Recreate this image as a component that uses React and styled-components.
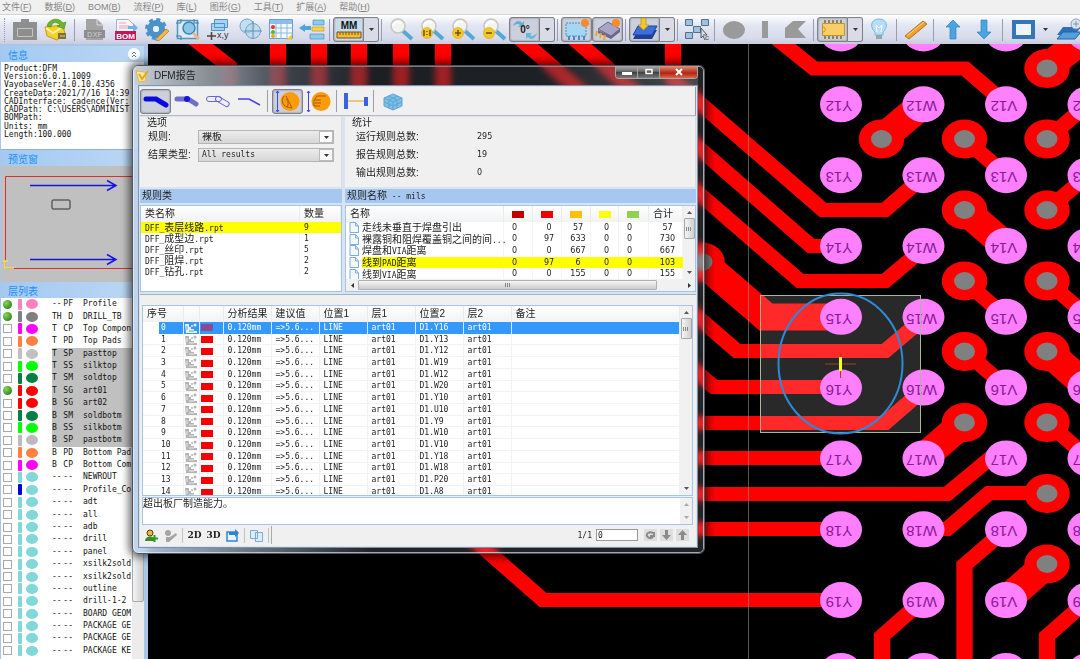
import React from "react";
import styled, { createGlobalStyle, css } from "styled-components";

const sans = `"DejaVu Sans", "Noto Sans CJK SC", sans-serif`;
const cjk = `"Liberation Sans", "Noto Sans CJK SC", sans-serif`;
const mono = `"DejaVu Sans Mono", "Noto Sans CJK SC", monospace`;

const GlobalStyle = createGlobalStyle`
  *, *::before, *::after { box-sizing: border-box; }
  body { margin: 0; background: #000; overflow: hidden; }
  button, input, select, textarea { font: inherit; color: inherit; margin: 0; }
  button { padding: 0; border: 0; background: none; }
`;

const Page = styled.div`
  position: relative;
  display: flex;
  flex-direction: column;
  height: 100vh;
  overflow: hidden;
  color: #222;
  font-family: ${cjk};
  font-size: 10px;
`;

const MenuBar = styled.nav`
  display: flex;
  gap: 13px;
  height: 15px;
  padding: 0 2px;
  background: #f0f0f0;
  border-bottom: 1px solid #d4d4d8;
`;

const MenuItem = styled.button`
  flex: none;
  color: #858585;
  font-size: 9px;
  line-height: 13px;
`;

const Toolbar = styled.div`
  display: flex;
  flex: none;
  align-items: center;
  height: 29px;
  overflow: hidden;
  background: linear-gradient(#fff, #e4e7f3 35%, #d6daea 80%, #c8ccdc);
`;

const Handle = styled.div`
  flex: none;
  width: 9px;
  height: 24px;
  border-left: 1px dotted #999;
  margin-left: 4px;
  margin-right: -4px;
`;

const Separator = styled.div`
  flex: none;
  width: 1px;
  height: 22px;
  margin: 0 ${(p) => (p.$wide ? "4px 0 3px" : "3px 0 2px")};
  background: #9a9eac;
`;

const ToolButton = styled.button`
  flex: none;
  display: flex;
  align-items: center;
  justify-content: center;
  width: 31px;
  height: 25px;
  svg { display: block; flex: none; }
  ${(p) =>
    p.$pressed &&
    css`
      border: 1px solid #7d7f88;
      border-radius: 3px;
      background: #ccd0dc;
      box-shadow: inset 0 0 2px #777;
    `}
`;

const Split = styled.div`
  display: flex;
  flex: none;
  ${ToolButton} { border-radius: 3px 0 0 3px; }
`;

const Drop = styled.button`
  flex: none;
  display: flex;
  align-items: center;
  justify-content: center;
  width: 15px;
  height: 25px;
  ${(p) =>
    p.$pressed &&
    css`
      border: 1px solid #7d7f88;
      border-left: 0;
      border-radius: 0 3px 3px 0;
      background: #d9dce6;
    `}
`;

const Workspace = styled.main`
  display: flex;
  flex: 1;
  min-height: 0;
`;

const Sidebar = styled.aside`
  display: flex;
  flex: none;
  flex-direction: column;
  width: 148px;
  padding: 2px 4px 0 1px;
  background: #aac6e6;
`;

const PanelHead = styled.h2`
  display: flex;
  flex: none;
  align-items: center;
  justify-content: space-between;
  height: 16px;
  margin: 0;
  padding: 0 4px 0 7px;
  background: linear-gradient(90deg, #a3c9f2, #bcd8f4);
  color: #2090f4;
  font-size: 10px;
  font-weight: 400;
`;

const Fold = styled.button`
  display: flex;
  width: 12px;
  height: 12px;
  border-radius: 6px;
  background: #fff;
`;

const Info = styled.div`
  display: grid;
  grid-auto-rows: 1fr;
  flex: none;
  height: 88px;
  padding: 3px 0 10px 3px;
  overflow: hidden;
  background: #fff;
  border-bottom: 1px solid #8fb0d6;
  color: #111;
  font-family: ${mono};
  font-size: 8px;
  line-height: 8px;
  white-space: pre;
`;

const Preview = styled.svg`
  display: block;
  flex: none;
  width: 100%;
  height: 116px;
  background: #c0c0c0;
`;

const LayerArea = styled.div`
  display: flex;
  flex: 1;
  min-height: 0;
  background: #fff;
`;

const LayerList = styled.div`
  display: grid;
  grid-auto-rows: 1fr;
  flex: 1;
  min-width: 0;
  padding-bottom: 2px;
  font-family: ${mono};
  font-size: 8px;
`;

const LayerRow = styled.label`
  display: grid;
  grid-template-columns: 15px 8px 26px 11px 20px 1fr;
  align-items: center;
  min-height: 0;
  padding-left: 2px;
  overflow: hidden;
  line-height: 10px;
  white-space: pre;
  color: #111;
  background: ${(p) =>
    p.$shaded ? "linear-gradient(90deg, #fff 51px, #c0c0c0 51px)" : "#fff"};
`;

const Visible = styled.input`
  appearance: none;
  width: 9px;
  height: 9px;
  border: 1px solid #a8a8a8;
  background: #fff;
  &:checked {
    border: 0;
    border-radius: 5px;
    background: radial-gradient(circle at 3px 3px, #8fd657, #2c8a1c 75%);
  }
`;

const LayerBar = styled.span`
  width: 4px;
  height: 11px;
  border-radius: 1px;
  background: ${(p) => p.$color};
`;

const LayerDot = styled.span`
  width: 12px;
  height: 10px;
  border-radius: 50%;
  background: ${(p) => p.$color};
`;

const Kind = styled.span`
  width: 10px;
  text-align: right;
`;

const SideScroll = styled.div`
  flex: none;
  width: 12px;
  background: #ececec;
  &::before {
    content: "";
    display: block;
    height: 304px;
    border: 1px solid #aaa;
    border-radius: 2px;
    background: linear-gradient(90deg, #f4f4f4, #cfcfd2);
  }
`;

const Board = styled.svg`
  display: block;
  flex: 1;
  min-width: 0;
  height: 100%;
  background: #000;
`;

/* the report window floats over the board */
const Window = styled.section`
  position: absolute;
  left: 132px;
  top: 65px;
  width: 573px;
  padding: 0 6px 5px 5px;
  border: 1px solid #50565e;
  border-radius: 6px;
  background: linear-gradient(90deg, rgba(190, 212, 238, 0.9) 6px, rgba(150, 160, 175, 0.22) 240px);
  box-shadow: inset 0 0 0 1px rgba(235, 240, 250, 0.65), 0 0 8px 3px rgba(0, 0, 0, 0.6);
  backdrop-filter: blur(3px);
`;

const TitleBar = styled.header`
  display: flex;
  justify-content: space-between;
  height: 19px;
  margin-left: -3px;
  border-radius: 5px 5px 0 0;
  background: linear-gradient(90deg, rgba(198, 205, 214, 0.9), rgba(140, 145, 150, 0.85) 70px, rgba(20, 25, 30, 0.4) 150px, rgba(20, 25, 30, 0.3) 400px, rgba(120, 130, 135, 0.4));
`;

const Title = styled.h1`
  display: flex;
  align-items: center;
  gap: 5px;
  margin: 0;
  color: #222;
  font-size: 10px;
  font-weight: 400;
  line-height: 18px;
`;

const WindowButtons = styled.div`
  display: flex;
  height: 13px;
  border: 1px solid #a6a6a6;
  border-top: 0;
  border-radius: 0 0 4px 4px;
  overflow: hidden;
`;

const WindowButton = styled.button`
  display: flex;
  align-items: center;
  justify-content: center;
  width: ${(p) => (p.$close ? 37 : 22)}px;
  border-right: 1px solid #a6a6a6;
  background: ${(p) =>
    p.$close
      ? "linear-gradient(#d79686, #c03a26 45%, #b42414 60%, #d8694a)"
      : "linear-gradient(#a8a8a8, #6c6c6c 45%, #3c3c3c 50%, #7a7a7a)"};
  &:last-child { border-right: 0; }
`;

const Client = styled.div`
  padding: 1px;
  background: #d9e4f2;
  border: 1px solid #8492a4;
`;

const ReportTools = styled.div`
  display: flex;
  align-items: center;
  height: 29px;
  background: #f0f0f0;
  border-right: 1px solid #999;
  border-bottom: 1px solid #bbb;
`;

const Columns = styled.div`
  display: grid;
  grid-template-columns: 202px 1fr;
  gap: 3px;
`;

const Group = styled.fieldset`
  height: 70px;
  min-width: 0;
  margin: 1px 0 0;
  padding: 1px 0 0 7px;
  border: 0;
  border-right: 1px solid #dcdcdc;
  background: #f0f0f0;
`;

const Legend = styled.h3`
  margin: 0;
  font-size: 10px;
  font-weight: 400;
  line-height: 10px;
`;

const Field = styled.div`
  display: grid;
  grid-template-columns: ${(p) => (p.$stat ? "121px" : "50px")} 136px;
  align-items: center;
  height: 18px;
  padding-left: ${(p) => (p.$stat ? 4 : 1)}px;
  font-size: 10px;
  line-height: 14px;
`;

const SelectBox = styled.div`
  position: relative;
  height: 14px;
`;

const Select = styled.select`
  appearance: none;
  display: block;
  width: 100%;
  height: 14px;
  padding: 0 0 0 3px;
  border: 1px solid #b4b4b4;
  border-radius: 0;
  background: linear-gradient(#ececec, #d6d6d6);
  font-family: ${(p) => (p.$mono ? mono : cjk)};
  font-size: ${(p) => (p.$mono ? 8 : 10)}px;
  line-height: 10px;
`;

const SelectArrow = styled.span`
  position: absolute;
  top: 1px;
  right: 1px;
  display: flex;
  align-items: center;
  justify-content: center;
  width: 14px;
  height: 12px;
  border: 1px solid #bbb;
  background: #fafafa;
  pointer-events: none;
`;

const Output = styled.output`
  font-family: ${sans};
  font-size: 8px;
`;

const Band = styled.h3`
  height: 14px;
  margin: 2px 0;
  padding-left: 2px;
  background: #a6c8f0;
  font-size: 10px;
  font-weight: 400;
  line-height: 13px;
`;

const Latin = styled.span`
  font-family: ${mono};
  font-size: 8px;
  line-height: 8px;
  white-space: pre;
`;

const ListBox = styled.div`
  display: flex;
  flex-direction: column;
  height: ${(p) => (p.$tall ? 191 : 87)}px;
  min-width: 0;
  background: #fff;
  border: 1px solid #a4c4e8;
`;

const ListBody = styled.div`
  display: flex;
  flex: 1;
  min-height: 0;
`;

const Clip = styled.div`
  flex: 1;
  min-width: 0;
  overflow: hidden;
`;

const Table = styled.table`
  width: 100%;
  height: ${(p) => p.$height}px;
  table-layout: fixed;
  border-collapse: collapse;
  font-family: ${(p) => (p.$mono ? mono : sans)};
  font-size: 8px;
  line-height: 10px;
  color: #222;
  th {
    height: 16px;
    padding: 0 0 0 4px;
    border-right: 1px solid #ebebeb;
    background: linear-gradient(#fff, #f1f2f4);
    font-family: ${cjk};
    font-size: 10px;
    font-weight: 400;
    line-height: 12px;
    text-align: left;
  }
  td {
    padding: 0 0 0 4px;
    border-right: 1px solid #f1f1f1;
    box-shadow: inset 0 -1px #f2f2f2;
    white-space: nowrap;
  }
`;

const RuleRow = styled.tr`
  background: ${(p) => (p.$active ? "#ffff00" : "none")};
  td {
    border-right-color: ${(p) => (p.$active ? "#ffff00" : "#f4f4f4")};
    box-shadow: none;
  }
`;

const CountCell = styled.td`
  && {
    padding-left: ${(p) => (p.$left ? 8 : 4)}px;
    text-align: ${(p) => (p.$left ? "left" : "center")};
  }
`;

const RuleName = styled.div`
  display: flex;
  align-items: center;
  gap: 3px;
  height: 11px;
  font-family: ${cjk};
  font-size: 10px;
  line-height: 11px;
  svg { flex: none; }
`;

const NameFill = styled.span`
  flex: 1;
  min-width: 0;
  height: 11px;
  background: ${(p) => (p.$active ? "#ffff00" : "none")};
`;

const NameCell = styled.td`
  && { padding-left: 3px; background: #fff; }
`;

const Swatch = styled.span`
  display: block;
  width: 12px;
  height: 7px;
  margin-left: ${(p) => (p.$flush ? 0 : 4)}px;
  background: ${(p) => p.$color};
`;

const ResultRow = styled.tr`
  ${(p) =>
    p.$active &&
    css`
      color: #fff;
      background: #3399ff;
      td { border-right-color: #d8ecff; box-shadow: none; }
      td:first-child { background: linear-gradient(90deg, #fff 16px, #3399ff 16px); }
    `}
`;

const IndexCell = styled.td`
  && { padding-left: 18px; }
`;

const IconCell = styled.td`
  && { padding-left: 1px; }
  svg { display: block; }
`;

const VScroll = styled.div`
  display: flex;
  flex: none;
  flex-direction: column;
  align-items: center;
  justify-content: space-between;
  width: 12px;
  padding: 1px 0;
  background: #f1f1f1;
`;

const ScrollButton = styled.button`
  display: flex;
  align-items: center;
  justify-content: center;
  width: 12px;
  height: 11px;
`;

const Thumb = styled.div`
  display: flex;
  align-items: center;
  justify-content: center;
  width: 11px;
  height: 21px;
  margin-bottom: auto;
  border: 1px solid #a8a8a8;
  border-radius: 1px;
  background: linear-gradient(90deg, #f5f5f5, #cfcfcf);
`;

const HScroll = styled.div`
  display: flex;
  flex: none;
  align-items: center;
  height: 12px;
  background: #f1f1f1;
`;

const HThumb = styled.div`
  flex: 1;
  display: flex;
  align-items: center;
  justify-content: center;
  height: 10px;
  margin-right: 26px;
  border: 1px solid #b0b0b0;
  border-radius: 1px;
  background: linear-gradient(#f5f5f5, #cbcbcb);
`;

const Results = styled.div`
  margin-top: 2px;
  padding: 10px 3px 1px 2px;
  background: #f0f0f0;
  border-top: 1px solid #a8b0ba;
`;

const NoteBox = styled.div`
  display: flex;
  height: 28px;
  margin-top: 1px;
  border: 1px solid #a4c4e8;
  background: #fff;
`;

const Note = styled.textarea`
  flex: 1;
  display: block;
  padding: 0;
  border: 0;
  outline: 0;
  resize: none;
  overflow: hidden;
  background: #fff;
  font-size: 10px;
  line-height: 12px;
`;

const Footer = styled.footer`
  display: flex;
  align-items: center;
  justify-content: space-between;
  height: 20px;
`;

const FooterTools = styled.div`
  display: flex;
  align-items: center;
  height: 18px;
  border-right: 1px solid #aaa;
`;

const SmallButton = styled.button`
  display: flex;
  align-items: center;
  justify-content: center;
  width: 19px;
  height: 16px;
  font-family: "DejaVu Serif", "Liberation Serif", serif;
  font-size: 9px;
  font-weight: 700;
`;

const SmallRule = styled.span`
  width: 1px;
  height: 15px;
  margin: 0 2px;
  background: #c2c2c2;
`;

const Pager = styled.div`
  display: flex;
  align-items: center;
  gap: 3px;
  padding-right: 4px;
  font-family: ${mono};
  font-size: 8px;
  ${SmallButton} { width: 13px; height: 12px; background: #dedede; }
`;

const PageInput = styled.input`
  width: 42px;
  height: 12px;
  margin: 0 3px 0 1px;
  padding: 0 1px;
  border: 1px solid #999;
  background: #fff;
`;

/* ---------- small drawings ---------- */

const Ico = ({ w = 26, h = 23, children }) => (
  <svg width={w} height={h} viewBox={`0 0 ${w} ${h}`} fill="none" aria-hidden="true">
    {children}
  </svg>
);

const Caret = ({ up, side, color = "#333" }) => (
  <svg width="7" height="7" viewBox="0 0 7 7" aria-hidden="true">
    <path d={side === "l" ? "M5 1v5L2 3.500z" : side === "r" ? "M2 1v5l3-2.500z" : up ? "M1 5h5L3.500 2z" : "M1 2h5L3.500 5z"} fill={color} />
  </svg>
);

const Grip = () => (
  <svg width="6" height="6" viewBox="0 0 6 6" aria-hidden="true">
    <path d="M.5 1v4M2.500 1v4M4.500 1v4" stroke="#888" />
  </svg>
);

const Briefcase = () => (
  <Ico>
    <path d="M1 4h8V1h8v3h8v18H1z" fill="#8e8e8e" />
    <path d="M5.500 10.500h15v8h-15z" stroke="#c4c4c4" />
  </Ico>
);

const Refresh = () => (
  <Ico>
    <path d="M2 9l2 9 10 4 8-6-2-9z" fill="#f5cf2a" stroke="#c9981a" />
    <path d="M3 10l7 5 10-6" stroke="#fff3a0" strokeWidth="2" />
    <path d="M4 8C6 0 16-1 20 5l3-1-2 7-7-3 3-1C13 3 9 4 8 9z" fill="#69b52c" stroke="#458a1a" strokeWidth=".6" />
    <path d="M15 15h8v6h-8z" fill="#7d7338" />
    <path d="M17 18h5" stroke="#d8cfa0" />
  </Ico>
);

const CadFile = () => (
  <Ico>
    <path d="M4 1h11l6 6v15H4z" fill="#a3a3a3" />
    <path d="M15 1v6h6" stroke="#ddd" />
    <path d="M2 12h21v8H2z" fill="#8d8d8d" />
    <text x="12.500" y="19" fontSize="7.500" fontWeight="700" textAnchor="middle" fill="#bcbcbc" fontFamily="Liberation Sans">DXF</text>
  </Ico>
);

const BomFile = () => (
  <Ico>
    <path d="M3.500 1.500h12l5 5v13h-17z" fill="#f4f6fa" stroke="#a9b0bf" />
    <path d="M6 5h7M6 8h10M6 10h10" stroke="#f0a0b0" />
    <path d="M15 8h5V5l5 5-5 4v-3h-5z" fill="#6db4e0" />
    <path d="M2 13h21v9H2z" fill="#c01858" />
    <text x="12.500" y="20.500" fontSize="8" fontWeight="700" textAnchor="middle" fill="#fff" fontFamily="Liberation Sans">BOM</text>
  </Ico>
);

const Gear = () => (
  <Ico>
    <circle cx="12" cy="11" r="6" stroke="#4a92cc" strokeWidth="6" />
    <circle cx="12" cy="11" r="9.500" stroke="#4a92cc" strokeWidth="3" strokeDasharray="4 3.460" />
    <circle cx="12" cy="11" r="3" fill="#e8f0f8" />
    <path d="M13 20l9-9 3 2-9 9-4 1z" fill="#f4b84a" stroke="#b97818" strokeWidth=".7" />
  </Ico>
);

const Inspect = () => (
  <Ico>
    <path d="M2.500 2.500h20v18h-20z" fill="#dceaf6" stroke="#5795bd" strokeWidth="1.500" />
    <path d="M6 1v4H1M19 1v4h5M6 22v-4H1" stroke="#3c7fa8" />
    <circle cx="14" cy="10" r="6" fill="#8fc8e6" stroke="#3b86b3" strokeWidth="1.500" />
    <path d="M18 15l6 6" stroke="#e9b887" strokeWidth="3" />
  </Ico>
);

const LayerXY = () => (
  <Ico>
    <path d="M8.500 1.500h13v8h-13zM5.500 5.500h13v7h-13z" fill="#a8d2ef" stroke="#4d93c4" />
    <path d="M1 18h9M5.500 14v8" stroke="#444" strokeWidth="1.500" />
    <text x="11" y="20" fontSize="9" fill="#333" fontFamily="Liberation Sans">x,y</text>
  </Ico>
);

const Circles = () => (
  <Ico>
    <circle cx="10" cy="8" r="7" fill="#c4dff0" stroke="#6fa5cb" />
    <circle cx="16" cy="13" r="7.500" fill="#b4d5ea" fillOpacity=".6" stroke="#6fa5cb" />
    <path d="M16 3v18M7 13h18" stroke="#5795bd" />
  </Ico>
);

const GridIcon = () => (
  <Ico>
    <path d="M1.500 1.500h23v19h-23z" fill="#f4f9ff" stroke="#6ba0cc" />
    <path d="M2 2h22v4H2z" fill="#8cc0ea" />
    <path d="M8 2v19M13 2v19M19 2v19M2 10h22M2 15h22" stroke="#8db9dc" />
    <circle cx="5" cy="9" r="2" fill="#e03428" />
    <circle cx="5" cy="14" r="2" fill="#57b434" />
    <circle cx="5" cy="18" r="2" fill="#f0a520" />
    <path d="M18 22l6-6v6z" fill="#f1c94a" />
  </Ico>
);

const Align = () => (
  <Ico>
    <path d="M0 10l6-4v2h6v4H6v2z" fill="#4aa5d8" />
    <path d="M14 2h11v5H14zM11 16h14v5H11z" fill="#8ccaee" stroke="#4a93c0" strokeWidth=".7" />
    <path d="M13 9h12v4H13z" fill="#f4d44c" stroke="#c49a20" strokeWidth=".7" />
  </Ico>
);

const Units = () => (
  <Ico w={28}>
    <path d="M1 1h26v21H1z" fill="#c5dced" />
    <text x="14" y="11" fontSize="10" fontWeight="700" textAnchor="middle" fill="#111" fontFamily="Liberation Sans">MM</text>
    <path d="M2 14h24v6H2z" fill="#f0bd3c" stroke="#7a5210" />
    <path d="M5 14v3M8 14v3M11 14v3M14 14v3M17 14v3M20 14v3M23 14v3" stroke="#7a5210" />
  </Ico>
);

const Magnifier = ({ mark }) => (
  <Ico>
    <path d="M15 13l9 8" stroke="#55a8d6" strokeWidth="4" />
    <circle cx="10" cy="8" r="7" fill="#f3f4f2" stroke="#c4c6c2" strokeWidth="1.500" />
    <path d="M5 8c1-4 5-5 8-3" stroke="#fff" strokeWidth="2" />
    {mark && (
      <>
        <circle cx="8" cy="15" r="5.500" fill="#f6c822" stroke="#d9a510" strokeWidth=".6" />
        <path d={mark} stroke="#70501a" strokeWidth="1.500" />
      </>
    )}
  </Ico>
);

const Rotate = () => (
  <Ico>
    <path d="M1 8c2-6 7-6 9-3l2-2v6H6l2-2C6 5 4 6 1 8z" fill="#63afd3" />
    <path d="M25 15c-2 7-7 7-9 4l-2 2v-6h6l-2 2c2 2 4 1 7-2z" fill="#63b8dc" />
    <text x="13" y="15" fontSize="10" fontWeight="700" textAnchor="middle" fill="#222" fontFamily="Liberation Sans">0°</text>
  </Ico>
);

const BoardIcon = () => (
  <Ico>
    <path d="M2 5h20v13H2z" fill="#a6d6f2" stroke="#3b8fc9" strokeDasharray="2 1" />
    <path d="M5 18v4M10 18v4M15 18v4M20 18v4" stroke="#3b8fc9" strokeWidth="2" />
    <circle cx="21" cy="5" r="4" fill="#f78b2a" />
  </Ico>
);

const ChipIso = () => (
  <Ico>
    <path d="M3 11L13 4l12 7-9 7z" fill="#a9a3c6" stroke="#6a6590" />
    <path d="M3 12v3l13 6v-3zM16 21l9-7v-3l-9 7z" fill="#6b668e" />
    <path d="M2 13l-1 5M6 15l-1 5M10 17l-1 5" stroke="#e7a82e" strokeWidth="2" />
    <circle cx="21" cy="5" r="4" fill="#f78b2a" />
  </Ico>
);

const Stack = () => (
  <Ico>
    <path d="M6 12h19l-5 9H1z" fill="#1f3f9a" />
    <path d="M6 8h19l-5 9H1z" fill="#3c70d8" stroke="#20409a" />
    <path d="M9 0h5v7h3l-5.500 5L6 7h3z" fill="#f3c62c" stroke="#b78a12" strokeWidth=".7" />
  </Ico>
);

const Squares = () => (
  <Ico>
    <path d="M1.500 1.500h7v6h-7zM17.500 1.500h7v6h-7zM9.500 8.500h7v6h-7zM1.500 14.500h7v6h-7z" fill="#9cc4e2" stroke="#50708e" />
    <path d="M17 10v10l2-2 2 4M17 10l6 7h-4" stroke="#555" />
    <text x="21" y="22" fontSize="8" fill="#555" fontFamily="Liberation Sans">c</text>
  </Ico>
);

const Bulb = () => (
  <Ico>
    <path d="M13 1c-9 0-9 9-4 13v3h8v-3c5-4 5-13-4-13z" fill="#b6def8" stroke="#7ab7e2" />
    <path d="M10 7l1 7M16 7l-1 7M10 7l3 3 3-3" stroke="#fff" />
    <path d="M10 17h6v4h-6z" fill="#9aa4ac" />
  </Ico>
);

const ChipFlat = () => (
  <Ico>
    <path d="M5 2v19M9 2v19M13 2v19M17 2v19M21 2v19" stroke="#7c6a2c" strokeWidth="1.500" />
    <path d="M2.500 5.500h22v12h-22z" fill="#f8cf67" stroke="#c8922a" />
    <path d="M3 9c3 0 3 5 0 5" stroke="#c8922a" />
  </Ico>
);

const Sheets = () => (
  <Ico>
    <path d="M7 9h18l-6 8H1z" fill="#2f6fb8" />
    <path d="M7 14h18l-6 7H1z" fill="#53a0dc" stroke="#2a62a0" />
    <circle cx="20" cy="6" r="5" fill="#dfe7ee" stroke="#8ba1b6" />
    <path d="M20 3v6M17 6h6" stroke="#7c98b0" />
  </Ico>
);

const Arrow = ({ down }) => (
  <Ico>
    <path
      d={down ? "M10 2h6v12h4l-7 7-7-7h4z" : "M10 21h6V9h4l-7-7-7 7h4z"}
      fill="#4ba4e2"
      stroke="#3582bd"
      strokeWidth=".7"
    />
  </Ico>
);

const TraceIcon = ({ kind }) => (
  <Ico>
    {kind === "solid" && <path d="M3 9h10l10 6" stroke="#0a0ae0" strokeWidth="5" strokeLinecap="round" />}
    {kind === "joint" && (
      <>
        <path d="M3 9h11l8 5" stroke="#6d70c4" strokeWidth="5" strokeLinecap="round" />
        <circle cx="13" cy="9" r="3" fill="#1414e0" />
      </>
    )}
    {kind === "outline" && (
      <>
        <rect x="1.500" y="6.500" width="15" height="5" rx="2.500" stroke="#6666dd" />
        <rect x="10.500" y="6.500" width="15" height="5" rx="2.500" stroke="#6666dd" transform="rotate(30 13 9)" />
      </>
    )}
    {kind === "line" && <path d="M2 9h11l11 6" stroke="#4444dd" strokeWidth="1.500" />}
  </Ico>
);

const PadIcon = ({ hand }) => (
  <Ico>
    <path d="M2.500 1v21M1 3l1.500-2L4 3M1 20l1.500 2L4 20" stroke="#4444e0" />
    <circle cx="15" cy="11.500" r="9.500" fill="#ff9a08" />
    <path
      d={hand ? "M20 6H11l-3 4v6h6M9 10h6M9 13h6" : "M9 6c-3 4-2 9 3 11l5 1-6-12M12 17c2-3 1-6-1-8"}
      stroke="#a35c05"
    />
  </Ico>
);

const Gauge = () => (
  <Ico>
    <path d="M4 11h18" stroke="#e5bd62" strokeWidth="1.500" />
    <path d="M1 3h4v16H1zM21 7h4v9h-4z" fill="#3a62e0" />
  </Ico>
);

const Cube = () => (
  <Ico>
    <path d="M4 8l9-4 9 4v8l-9 4-9-4z" fill="#7cc0ea" stroke="#5ea4d4" />
    <path d="M4 8l9 4 9-4M13 12v8M8 6l9 4v8M18 6l-9 4v8M4 12l9 4 9-4" stroke="#5ea4d4" />
  </Ico>
);

const NotePencil = () => (
  <Ico w={14} h={14}>
    <path d="M1 2l9 1 1 9-7 1z" fill="#f5e6a0" stroke="#e0b83a" />
    <path d="M4 5l3 5 6-8" stroke="#e3a81c" strokeWidth="2" />
  </Ico>
);

const PageIcon = () => (
  <svg width="10" height="11" viewBox="0 0 10 11" fill="none" aria-hidden="true">
    <path d="M1 .5h5.500L9.500 4v6.500H1z" fill="#f4f9ff" stroke="#7fabd8" />
    <path d="M6.500.5V4h3" stroke="#7fabd8" />
  </svg>
);

const ItemIcon = ({ active }) => (
  <svg width="13" height="10" viewBox="0 0 13 10" fill={active ? "#e8f0f4" : "#b4b4b4"} aria-hidden="true">
    <path d="M0 1h4v3h2v2h3v2h3v2H1z" />
    <circle cx="10" cy="2" r="1.500" />
    <circle cx="7" cy="3" r="1" />
    <path d="M2 3v4M4 8h5" stroke={active ? "#79a" : "#eee"} fill="none" />
  </svg>
);

/* ---------- data ---------- */

const MENUS = [
  ["文件", "F"], ["数据", "D"], ["BOM", "B"], ["流程", "P"], ["库", "L"],
  ["图形", "G"], ["工具", "T"], ["扩展", "A"], ["帮助", "H"],
];

const INFO = [
  "Product:DFM",
  "Version:6.0.1.1009",
  "VayobaseVer:4.0.10.4356",
  "CreateData:2021/7/16 14:39",
  "CADInterface: cadence(Ver:",
  "CADPath: C:\\USERS\\ADMINIST",
  "BOMPath:",
  "Units: mm",
  "Length:100.000",
];

const TEAL = "#80d8d8";
const LAYERS = [
  ["--", "PF", "Profile", "#ff80c0", 1],
  ["TH", "D", "DRILL_TB", "#808080", 1],
  ["T", "CP", "Top Compon", "#ff00ff"],
  ["T", "PD", "Top Pads", "#ff8040"],
  ["T", "SP", "pasttop", "#c0c0c0", 0, 1],
  ["T", "SS", "silktop", "#00ff00", 0, 1],
  ["T", "SM", "soldtop", "#008040", 0, 1],
  ["T", "SG", "art01", "#ff0000", 1, 1],
  ["B", "SG", "art02", "#ff0000", 0, 1],
  ["B", "SM", "soldbotm", "#008040", 0, 1],
  ["B", "SS", "silkbotm", "#00ff00", 0, 1],
  ["B", "SP", "pastbotm", "#c0b8c0", 0, 1],
  ["B", "PD", "Bottom Pad", "#ff8040"],
  ["B", "CP", "Bottom Com", "#ff00ff"],
  ...["NEWROUT", "Profile_Co", "adt", "all", "adb", "drill", "panel", "xsilk2sold", "xsilk2sold",
    "outline", "drill-1-2", "BOARD GEOM", "PACKAGE GE", "PACKAGE GE", "PACKAGE KE",
  ].map((name) => ["--", "--", name, TEAL]),
];

const CLASSES = [
  ["DFF_表层线路.rpt", 9],
  ["DFF_成型边.rpt", 1],
  ["DFF_丝印.rpt", 5],
  ["DFF_阻焊.rpt", 2],
  ["DFF_钻孔.rpt", 2],
];

const RULES = [
  ["走线未垂直于焊盘引出", 0, 0, 57, 0, 0, 57],
  ["裸露铜和阻焊覆盖铜之间的间...", 0, 97, 633, 0, 0, 730],
  ["焊盘和VIA距离", 0, 0, 667, 0, 0, 667],
  ["线到PAD距离", 0, 97, 6, 0, 0, 103],
  ["线到VIA距离", 0, 0, 155, 0, 0, 155],
];

const LEVELS = ["#c00000", "#f00000", "#ffc000", "#ffff00", "#92d050"];

const PINS = ["Y16", "Y13", "Y12", "W19", "W12", "W20", "Y10", "U10", "Y9", "W10", "V10", "Y18", "W18", "P20", "A8"];

// board pixels are wider than tall, so x is divided by SX inside the scaled group
const SX = 1.165;
const line = (pts) => pts.map(([x, y]) => `${x / SX},${y}`).join(" ");

const PAD_COLUMNS = [["Y", 841], ["W", 923.5], ["V", 1006], ["U", 1088.5]];
const PAD_ROWS = Array.from({ length: 10 }, (_, i) => 11 + i);
const rowY = (row) => 104.3 + (row - 12) * 70.83;

const TRACES = [
  [[750, 17], [814, 68.5], [965, 68.5], [1006, 104]],
  [[673, 30], [673, 80], [823, 210], [885, 210], [923, 177]],
  [[564, 30], [811, 246], [841, 246]],
  [[510, 30], [800, 281], [885, 281], [923, 249]],
  [[180, 28], [229, 66], [229, 120]],
  [[278, 30], [278, 120]],
  [[319, 30], [319, 120]],
  [[359, 30], [359, 120]],
  [[401, 30], [401, 120]],
  [[443, 30], [443, 120]],
  [[680, 302], [737, 351], [885, 351], [923, 319]],
  [[680, 358], [714, 387], [841, 387]],
  [[680, 423], [885, 423], [923, 390]],
  [[680, 458], [841, 458]],
  [[680, 494], [947, 494], [1000, 450]],
  [[680, 529], [841, 529]],
  [[437, 507], [543, 600], [841, 600]],
  [[923, 529], [947, 529], [989, 493], [1047, 493]],
  [[1006, 529], [964.5, 565], [964.5, 680]],
  [[923, 600], [882, 636], [882, 680]],
  [[1088, 600], [1047, 636], [1047, 680]],
  [[964.5, 139], [1006, 175]],
  [[964.5, 281], [1006, 317]],
  [[964.5, 351], [1006, 387]],
  [[1047, 139], [1088, 104]],
  [[1047, 210], [1088, 175]],
  [[1047, 281], [1088, 317]],
  [[1047, 422], [1088, 458]],
];

const FAT_TRACES = [
  [[702, 262], [766, 317], [841, 317]],
  [[881.5, 139], [923, 104]],
  [[964.5, 210], [1006, 246]],
  [[964.5, 422], [923, 458]],
  [[1047, 564], [1006, 600]],
  [[1047, 351], [1088, 387]],
  [[1047, 68], [1088, 34]],
];

const VIAS = [
  [702, 262], [881.5, 139], [964.5, 139], [964.5, 210], [964.5, 281], [964.5, 351.5], [964.5, 422.5],
  [1047, 68.5], [1047, 139], [1047, 210], [1047, 281], [1047, 351.5], [1047, 422.5], [1047, 493.5], [1047, 564],
];

/* ---------- parts ---------- */

const Mixed = ({ children }) =>
  children.split(/([\u3000-\u9fff]+)/).map((part, i) =>
    i % 2 ? <span key={i}>{part}</span> : part && <Latin key={i}>{part}</Latin>
  );

const MainToolbar = () => (
  <Toolbar role="toolbar" aria-label="主工具栏">
    <Handle />
    <ToolButton aria-label="打开"><Briefcase /></ToolButton>
    <ToolButton aria-label="刷新"><Refresh /></ToolButton>
    <Separator $wide />
    <ToolButton aria-label="CAD"><CadFile /></ToolButton>
    <ToolButton aria-label="物料"><BomFile /></ToolButton>
    <ToolButton aria-label="设置"><Gear /></ToolButton>
    <ToolButton aria-label="检查"><Inspect /></ToolButton>
    <ToolButton aria-label="坐标"><LayerXY /></ToolButton>
    <ToolButton aria-label="对位"><Circles /></ToolButton>
    <ToolButton aria-label="列表"><GridIcon /></ToolButton>
    <ToolButton aria-label="对齐"><Align /></ToolButton>
    <Separator />
    <Split>
      <ToolButton $pressed aria-label="单位"><Units /></ToolButton>
      <Drop $pressed aria-label="单位选项"><Caret /></Drop>
    </Split>
    <Separator />
    <ToolButton aria-label="缩放"><Magnifier /></ToolButton>
    <ToolButton aria-label="适合"><Magnifier mark="M5 12v6M11 12v6M8 13v1M8 16v1" /></ToolButton>
    <ToolButton aria-label="放大"><Magnifier mark="M5 15h6M8 12v6" /></ToolButton>
    <ToolButton aria-label="缩小"><Magnifier mark="M5 15h6" /></ToolButton>
    <Split>
      <ToolButton $pressed aria-label="旋转"><Rotate /></ToolButton>
      <Drop $pressed aria-label="旋转选项"><Caret /></Drop>
    </Split>
    <Separator />
    <ToolButton $pressed aria-label="板"><BoardIcon /></ToolButton>
    <ToolButton $pressed aria-label="元件"><ChipIso /></ToolButton>
    <Separator />
    <Split>
      <ToolButton $pressed aria-label="层"><Stack /></ToolButton>
      <Drop $pressed aria-label="层选项"><Caret /></Drop>
    </Split>
    <Separator />
    <ToolButton aria-label="选择"><Squares /></ToolButton>
    <Separator />
    <ToolButton aria-label="圆"><Ico><ellipse cx="13" cy="12" rx="11" ry="9" fill="#9a9a9a" /></Ico></ToolButton>
    <ToolButton aria-label="线"><Ico><path d="M10 3h6v17h-6z" fill="#9a9a9a" /></Ico></ToolButton>
    <ToolButton aria-label="面"><Ico><path d="M2 10l8-7h13l-8 8 8 9H2z" fill="#9a9a9a" /></Ico></ToolButton>
    <Separator />
    <Split>
      <ToolButton $pressed aria-label="封装"><ChipFlat /></ToolButton>
      <Drop $pressed aria-label="封装选项"><Caret /></Drop>
    </Split>
    <ToolButton aria-label="高亮"><Bulb /></ToolButton>
    <Separator />
    <ToolButton aria-label="测量">
      <Ico><path d="M2 18L20 3l4 3L6 21z" fill="#eda02e" stroke="#b97416" /><path d="M4 18L21 4" stroke="#ffd58a" /></Ico>
    </ToolButton>
    <Separator />
    <ToolButton aria-label="上一个"><Arrow /></ToolButton>
    <ToolButton aria-label="下一个"><Arrow down /></ToolButton>
    <Separator $wide />
    <ToolButton aria-label="框选"><Ico><path d="M4 4h19v15H4z" fill="#eef3fa" stroke="#3576b8" strokeWidth="4" /></Ico></ToolButton>
    <Drop aria-label="框选选项"><Caret /></Drop>
    <ToolButton aria-label="叠层"><Sheets /></ToolButton>
  </Toolbar>
);

const LeftSide = () => (
  <Sidebar>
    <PanelHead>
      信息
      <Fold aria-label="收起">
        <svg width="12" height="12" viewBox="0 0 12 12" fill="none">
          <path d="M4 6l2-2 2 2M4 9l2-2 2 2" stroke="#4a7ab0" />
        </svg>
      </Fold>
    </PanelHead>
    <Info>{INFO.map((text) => <div key={text}>{text}</div>)}</Info>
    <PanelHead>预览窗</PanelHead>
    <Preview>
      <path d="M150 10.500H4.500v92H150" fill="none" stroke="#d83030" />
      <path d="M29 19.500h86M106 14.500l9 5-9 5M29 93.500h86M106 88.500l9 5-9 5" fill="none" stroke="#1414e8" strokeWidth="1.500" />
      <rect x="51" y="34" width="18" height="9" rx="1" fill="none" stroke="#333" />
      <path d="M4 95v7h9M2 95h5" fill="none" stroke="#f0e060" strokeWidth="1.500" />
    </Preview>
    <PanelHead>层列表</PanelHead>
    <LayerArea>
      <LayerList>
        {LAYERS.map(([side, kind, name, color, on, shaded], i) => (
          <LayerRow key={i} $shaded={shaded}>
            <Visible type="checkbox" defaultChecked={!!on} />
            <LayerBar $color={name === "Profile_Co" ? "#0000e0" : color} />
            <LayerDot $color={color} />
            <span>{side}</span>
            <Kind>{kind}</Kind>
            <span>{name}</span>
          </LayerRow>
        ))}
      </LayerList>
      <SideScroll />
    </LayerArea>
  </Sidebar>
);

const PadLabel = ({ children }) => (
  <text
    transform="translate(-2 -3) rotate(180)"
    textAnchor="middle"
    fontFamily="Liberation Sans"
    fontSize="15"
    fill="#8a189a"
  >
    {children}
  </text>
);

const BoardView = () => (
  <Board aria-label="art01">
    <g transform="translate(-148 -44)">
      <g transform={`scale(${SX} 1)`}>
        <g fill="none" stroke="#ff0000">
          {TRACES.map((pts, i) => <polyline key={i} points={line(pts)} strokeWidth="14" />)}
          {FAT_TRACES.map((pts, i) => <polyline key={i} points={line(pts)} strokeWidth="27" />)}
        </g>
        {VIAS.map(([x, y]) => <circle key={`${x}-${y}`} cx={x / SX} cy={y} r="19.500" fill="#ff0000" />)}
        {VIAS.map(([x, y]) => <circle key={`${x}-${y}`} cx={x / SX} cy={y} r="9" fill="#808080" />)}
      </g>
      <rect x="760" y="295" width="161" height="138" fill="#fff" fillOpacity=".16" />
      {PAD_COLUMNS.map(([letter, x]) =>
        PAD_ROWS.map((row) => (
          <g key={letter + row} transform={`translate(${x} ${rowY(row)})`}>
            <ellipse rx="21" ry="18" fill="#ff80ff" />
            {row > 11 && row < 20 && <PadLabel>{letter + row}</PadLabel>}
          </g>
        ))
      )}
      <path d="M748.500 44V1200" stroke="#8c8c8c" strokeOpacity=".6" />
      <rect x="760.500" y="295.500" width="160" height="137" fill="none" stroke="#a9b894" />
      <ellipse cx="840.500" cy="363.500" rx="62" ry="70" fill="none" stroke="#2c8ad8" strokeWidth="2" />
      <path d="M825 364h31M840.500 354v24" stroke="#a04020" />
      <path d="M840.500 357v14" stroke="#ffff20" strokeWidth="3" />
    </g>
  </Board>
);

const Scrollbar = ({ thumb }) => (
  <VScroll>
    <ScrollButton aria-label="向上"><Caret up color={thumb ? "#555" : "#aaa"} /></ScrollButton>
    {thumb && <Thumb><Grip /></Thumb>}
    <ScrollButton aria-label="向下"><Caret color={thumb ? "#555" : "#aaa"} /></ScrollButton>
  </VScroll>
);

const Dropdown = ({ id, label, value, latin }) => (
  <Field>
    <label htmlFor={id}>{label}</label>
    <SelectBox>
      <Select id={id} $mono={latin}><option>{value}</option></Select>
      <SelectArrow><Caret /></SelectArrow>
    </SelectBox>
  </Field>
);

const ClassTable = () => (
  <ListBox>
    <Clip>
      <Table $mono $height={71}>
        <colgroup><col /><col width="41" /></colgroup>
        <thead><tr><th>类名称</th><th>数量</th></tr></thead>
        <tbody>
          {CLASSES.map(([name, count], i) => (
            <RuleRow key={name} $active={i === 0}>
              <td><RuleName><span><Mixed>{name}</Mixed></span></RuleName></td>
              <td>{count}</td>
            </RuleRow>
          ))}
        </tbody>
      </Table>
    </Clip>
  </ListBox>
);

const RuleTable = () => (
  <ListBox>
    <ListBody>
      <Clip>
        <Table $height={74}>
          <colgroup>
            <col />
            <col width="29" /><col width="29" /><col width="29" /><col width="28" /><col width="30" /><col width="34" />
          </colgroup>
          <thead>
            <tr>
              <th>名称</th>
              {LEVELS.map((color) => <th key={color}><Swatch $color={color} /></th>)}
              <th>合计</th>
            </tr>
          </thead>
          <tbody>
            {RULES.map(([name, ...counts], i) => (
              <RuleRow key={name} $active={i === 3}>
                <NameCell>
                  <RuleName><PageIcon /><NameFill $active={i === 3}><Mixed>{name}</Mixed></NameFill></RuleName>
                </NameCell>
                {counts.map((n, k) => <CountCell key={k} $left={k === 0 || k === 4}>{n}</CountCell>)}
              </RuleRow>
            ))}
          </tbody>
        </Table>
      </Clip>
      <Scrollbar thumb />
    </ListBody>
    <HScroll>
      <ScrollButton aria-label="向左"><Caret side="l" /></ScrollButton>
      <HThumb><Grip /></HThumb>
      <ScrollButton aria-label="向右"><Caret side="r" /></ScrollButton>
    </HScroll>
  </ListBox>
);

const ResultTable = () => (
  <ListBox $tall>
    <ListBody>
      <Clip>
        <Table $mono $height={192}>
          <colgroup>
            <col width="40" /><col width="16" /><col width="24" /><col width="48" />
            <col width="48" /><col width="48" /><col width="48" /><col width="48" /><col width="48" /><col />
          </colgroup>
          <thead>
            <tr>
              <th>序号</th><th /><th />
              {["分析结果", "建议值", "位置1", "层1", "位置2", "层2", "备注"].map((h) => <th key={h}>{h}</th>)}
            </tr>
          </thead>
          <tbody>
            {PINS.map((pin, i) => (
              <ResultRow key={pin} $active={i === 0}>
                <IndexCell>{i}</IndexCell>
                <IconCell><ItemIcon active={i === 0} /></IconCell>
                <IconCell><Swatch $flush $color={i === 0 ? "#8b4a95" : "#f40000"} /></IconCell>
                <td>0.120mm</td>
                <td>=&gt;5.6...</td>
                <td>LINE</td>
                <td>art01</td>
                <td>D1.{pin}</td>
                <td>art01</td>
                <td />
              </ResultRow>
            ))}
          </tbody>
        </Table>
      </Clip>
      <Scrollbar thumb />
    </ListBody>
  </ListBox>
);

const ReportWindow = () => (
  <Window>
    <TitleBar>
      <Title><NotePencil />DFM报告</Title>
      <WindowButtons>
        <WindowButton aria-label="最小化"><Ico w={10} h={8}><path d="M0 4h10v3H0z" fill="#fff" /></Ico></WindowButton>
        <WindowButton aria-label="最大化"><Ico w={10} h={8}><path d="M2 1.500h6v4H2z" stroke="#fff" strokeWidth="1.500" /></Ico></WindowButton>
        <WindowButton $close aria-label="关闭"><Ico w={10} h={8}><path d="M2 1l6 6M8 1L2 7" stroke="#fff" strokeWidth="2" /></Ico></WindowButton>
      </WindowButtons>
    </TitleBar>
    <Client>
      <ReportTools>
        <ToolButton $pressed aria-label="实线"><TraceIcon kind="solid" /></ToolButton>
        <ToolButton aria-label="节点"><TraceIcon kind="joint" /></ToolButton>
        <ToolButton aria-label="轮廓"><TraceIcon kind="outline" /></ToolButton>
        <ToolButton aria-label="中心线"><TraceIcon kind="line" /></ToolButton>
        <Separator $wide />
        <ToolButton $pressed aria-label="焊盘"><PadIcon /></ToolButton>
        <ToolButton aria-label="拖动"><PadIcon hand /></ToolButton>
        <Separator />
        <ToolButton aria-label="间距"><Gauge /></ToolButton>
        <Separator />
        <ToolButton aria-label="三维"><Cube /></ToolButton>
      </ReportTools>
      <Columns>
        <Group>
          <Legend>选项</Legend>
          <Dropdown id="rule" label="规则:" value="裸板" />
          <Dropdown id="kind" label="结果类型:" value="All results" latin />
        </Group>
        <Group>
          <Legend>统计</Legend>
          <Field $stat><span>运行规则总数:</span><Output>295</Output></Field>
          <Field $stat><span>报告规则总数:</span><Output>19</Output></Field>
          <Field $stat><span>输出规则总数:</span><Output>0</Output></Field>
        </Group>
      </Columns>
      <Columns>
        <div>
          <Band>规则类</Band>
          <ClassTable />
        </div>
        <div>
          <Band>规则名称<Latin> -- mils</Latin></Band>
          <RuleTable />
        </div>
      </Columns>
      <Results>
        <ResultTable />
        <NoteBox>
          <Note aria-label="说明" defaultValue="超出板厂制造能力。" />
          <Scrollbar />
        </NoteBox>
        <Footer>
          <FooterTools>
            <SmallButton aria-label="添加用户">
              <Ico w={13} h={13}>
                <circle cx="5" cy="4" r="3" fill="#e9b93c" stroke="#5a3c12" />
                <path d="M0 12c0-6 10-6 10 0z" fill="#3f8a2a" />
                <path d="M9.500 6v7M6 9.500h7" stroke="#2c9a1c" strokeWidth="2" />
              </Ico>
            </SmallButton>
            <SmallButton aria-label="编辑">
              <Ico w={13} h={13}>
                <circle cx="4" cy="4" r="3" fill="#a4a4a4" />
                <path d="M2 8h4l6-4 1 2-8 7H2z" fill="#a4a4a4" />
              </Ico>
            </SmallButton>
            <SmallRule />
            <SmallButton>2D</SmallButton>
            <SmallButton>3D</SmallButton>
            <SmallButton aria-label="导出">
              <Ico w={13} h={13}>
                <path d="M1 3h10v9H1z" fill="#e6f3fd" stroke="#2d86cc" strokeWidth="1.500" />
                <path d="M3 3h6V0l4 4-4 4V6H3z" fill="#2d86cc" />
              </Ico>
            </SmallButton>
            <SmallRule />
            <SmallButton aria-label="复制">
              <Ico w={14} h={13}>
                <path d="M.5 1.500h7v8h-7zM5.500 3.500h7v9h-7z" fill="#dcecfb" stroke="#7aa9da" />
              </Ico>
            </SmallButton>
            <SmallRule />
          </FooterTools>
          <Pager>
            <label htmlFor="page">1/1</label>
            <PageInput id="page" defaultValue="0" />
            <SmallButton aria-label="跳转">
              <Ico w={11} h={11}><path d="M8 3C4 1 1 4 2 6s4 3 6 1M9 2v4H5" stroke="#8a8a8a" strokeWidth="2" /></Ico>
            </SmallButton>
            <SmallButton aria-label="下一页">
              <Ico w={11} h={11}><path d="M4 0h3v5h3l-4.500 5L1 5h3z" fill="#8a8a8a" /></Ico>
            </SmallButton>
            <SmallButton aria-label="上一页">
              <Ico w={11} h={11}><path d="M4 10h3V5h3L5.500 0 1 5h3z" fill="#8a8a8a" /></Ico>
            </SmallButton>
          </Pager>
        </Footer>
      </Results>
    </Client>
  </Window>
);

export default function App() {
  return (
    <Page>
      <GlobalStyle />
      <MenuBar>
        {MENUS.map(([name, key]) => <MenuItem key={name}>{name}(<u>{key}</u>)</MenuItem>)}
      </MenuBar>
      <MainToolbar />
      <Workspace>
        <LeftSide />
        <BoardView />
      </Workspace>
      <ReportWindow />
    </Page>
  );
}
